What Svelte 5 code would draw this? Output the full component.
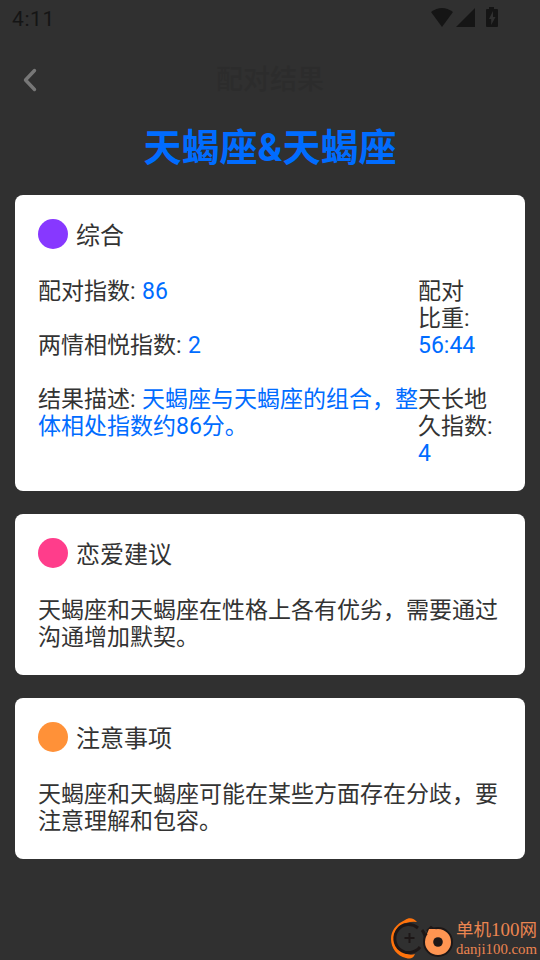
<script>
  const title = '天蝎座&天蝎座';
  const left = [
    { label: '配对指数', value: '86' },
    { label: '两情相悦指数', value: '2' },
    { label: '结果描述', value: '天蝎座与天蝎座的组合，整体相处指数约86分。' }
  ];
  const right = [
    { lines: ['配对', '比重:'], value: '56:44' },
    { lines: ['天长地', '久指数:'], value: '4' }
  ];
  const notes = [
    { name: '恋爱建议', color: '#ff3d8b', text: '天蝎座和天蝎座在性格上各有优劣，需要通过沟通增加默契。' },
    { name: '注意事项', color: '#ff9138', text: '天蝎座和天蝎座可能在某些方面存在分歧，要注意理解和包容。' }
  ];
</script>

<main class="screen">
  <div class="status">
    <span class="time">4:11</span>
    <svg class="signals" width="69" height="28" viewBox="0 0 69 28" fill="#151515">
      <path d="M1 12Q12 4 23 12L12 27Z" />
      <path d="M45 8V27H26Z" />
      <path fill-rule="evenodd" d="M59 7h5v2h3q1 0 1 1v16q0 1-1 1H57q-1 0-1-1V10q0-1 1-1h2zM63 11l-4 8h2.200v6l4.300-8H63z" />
    </svg>
  </div>
  <header class="nav">
    <svg width="14" height="24" viewBox="0 0 14 24" fill="none" stroke="#777" stroke-width="3.400" stroke-linecap="round" stroke-linejoin="round"><path d="M11.500 2.500 2.500 12 11.500 21.500" /></svg>
    <span class="nav-title">配对结果</span>
  </header>
  <h1>{title}</h1>

  <section class="card">
    <h2><i class="dot" style:background="#8738ff"></i><span>综合</span></h2>
    <div class="columns">
      <div class="col left">
        {#each left as row}
          <p><span class="label">{row.label}:</span> <b>{row.value}</b></p>
        {/each}
      </div>
      <div class="col right">
        {#each right as row}
          <p>{row.lines[0]}<br />{row.lines[1]}<br /><b>{row.value}</b></p>
        {/each}
      </div>
    </div>
  </section>

  {#each notes as note}
    <section class="card">
      <h2><i class="dot" style:background={note.color}></i><span>{note.name}</span></h2>
      <p>{note.text}</p>
    </section>
  {/each}

  <div class="watermark">
    <svg width="64" height="44" viewBox="0 0 64 44" fill="none">
      <path d="M27 6C24 2 19 1 15 4 6 8 1 15 1 23c0 9 6 17 15 19 4 1 7 1 9-4-3 1-7 1-10-1C8 34 4 29 4 22 4 14 9 8 16 7q6-2 11-1z" fill="#ff730c" />
      <path d="M28 12A14 14 0 1 0 30 31M32 14q4 5 3 11" stroke="#1d1717" stroke-width="3" />
      <path d="M19.500 17v10M14.500 22h10" stroke="#1d1717" stroke-width="2" />
      <circle cx="48" cy="26" r="14" fill="#ff9552" stroke="#1d1717" stroke-width="2" />
      <path d="M37 15l4-4 3 2" stroke="#1d1717" stroke-width="2" />
      <path d="M37 18l2-5 7 0-5 6z" fill="#ff9552" />
      <circle cx="48" cy="26" r="4.800" fill="#1d1717" />
    </svg>
    <div class="brand">
      <span class="cn">单机<span class="num">100</span>网</span>
      <span class="url">danji100.com</span>
    </div>
  </div>
</main>

<style>
  :global(body) { margin: 0; background: #303030; }
  .screen {
    position: relative;
    box-sizing: border-box;
    width: 540px;
    height: 960px;
    overflow: hidden;
    background: #303030;
    color: #333;
    font: 23px/27px Roboto, "Noto Sans CJK SC", sans-serif;
  }
  .status { display: flex; justify-content: space-between; height: 38px; padding: 0 41px 0 12px; }
  .time { font-size: 21px; font-weight: 400; line-height: 38px; letter-spacing: .6px; color: #151515; }
  .nav { display: flex; align-items: center; height: 84px; padding: 0 23px; }
  .nav-title { flex: 1; margin-right: 14px; text-align: center; font-size: 27px; font-weight: 500; color: #2c2c2c; }
  h1 { box-sizing: border-box; margin: 0 0 23px; padding-top: 1px; height: 50px; line-height: 51px; text-align: center; font-size: 38px; font-weight: 700; color: #006cff; }
  .card { box-sizing: border-box; margin: 0 15px 23px; padding: 24px 23px; border-radius: 8px; background: #fff; }
  h2 { display: flex; align-items: center; gap: 8px; margin: 0 0 29px; height: 30px; font-size: 24px; line-height: 27px; font-weight: 400; }
  h2 span { padding-top: 4px; }
  .dot { width: 30px; height: 30px; border-radius: 50%; }
  .columns { display: flex; }
  .left { width: 381px; margin-right: -1px; flex: none; }
  .label { margin-right: .7px; }
  .right { flex: 1; white-space: nowrap; }
  .col { display: flex; flex-direction: column; gap: 27px; }
  p { margin: 0; }
  b { font-weight: 400; color: #006cff; }
  .watermark { position: absolute; left: 390px; top: 916px; display: flex; }
  .brand { display: flex; flex-direction: column; gap: 2px; margin-left: 2px; color: #eb8550; white-space: nowrap; }
  .cn { font: 17.5px/26px "Noto Sans CJK SC", sans-serif; }
  .num { font: 19px/20px "Liberation Serif", serif; }
  .url { font: 14.8px/11px "Liberation Serif", serif; }
</style>
